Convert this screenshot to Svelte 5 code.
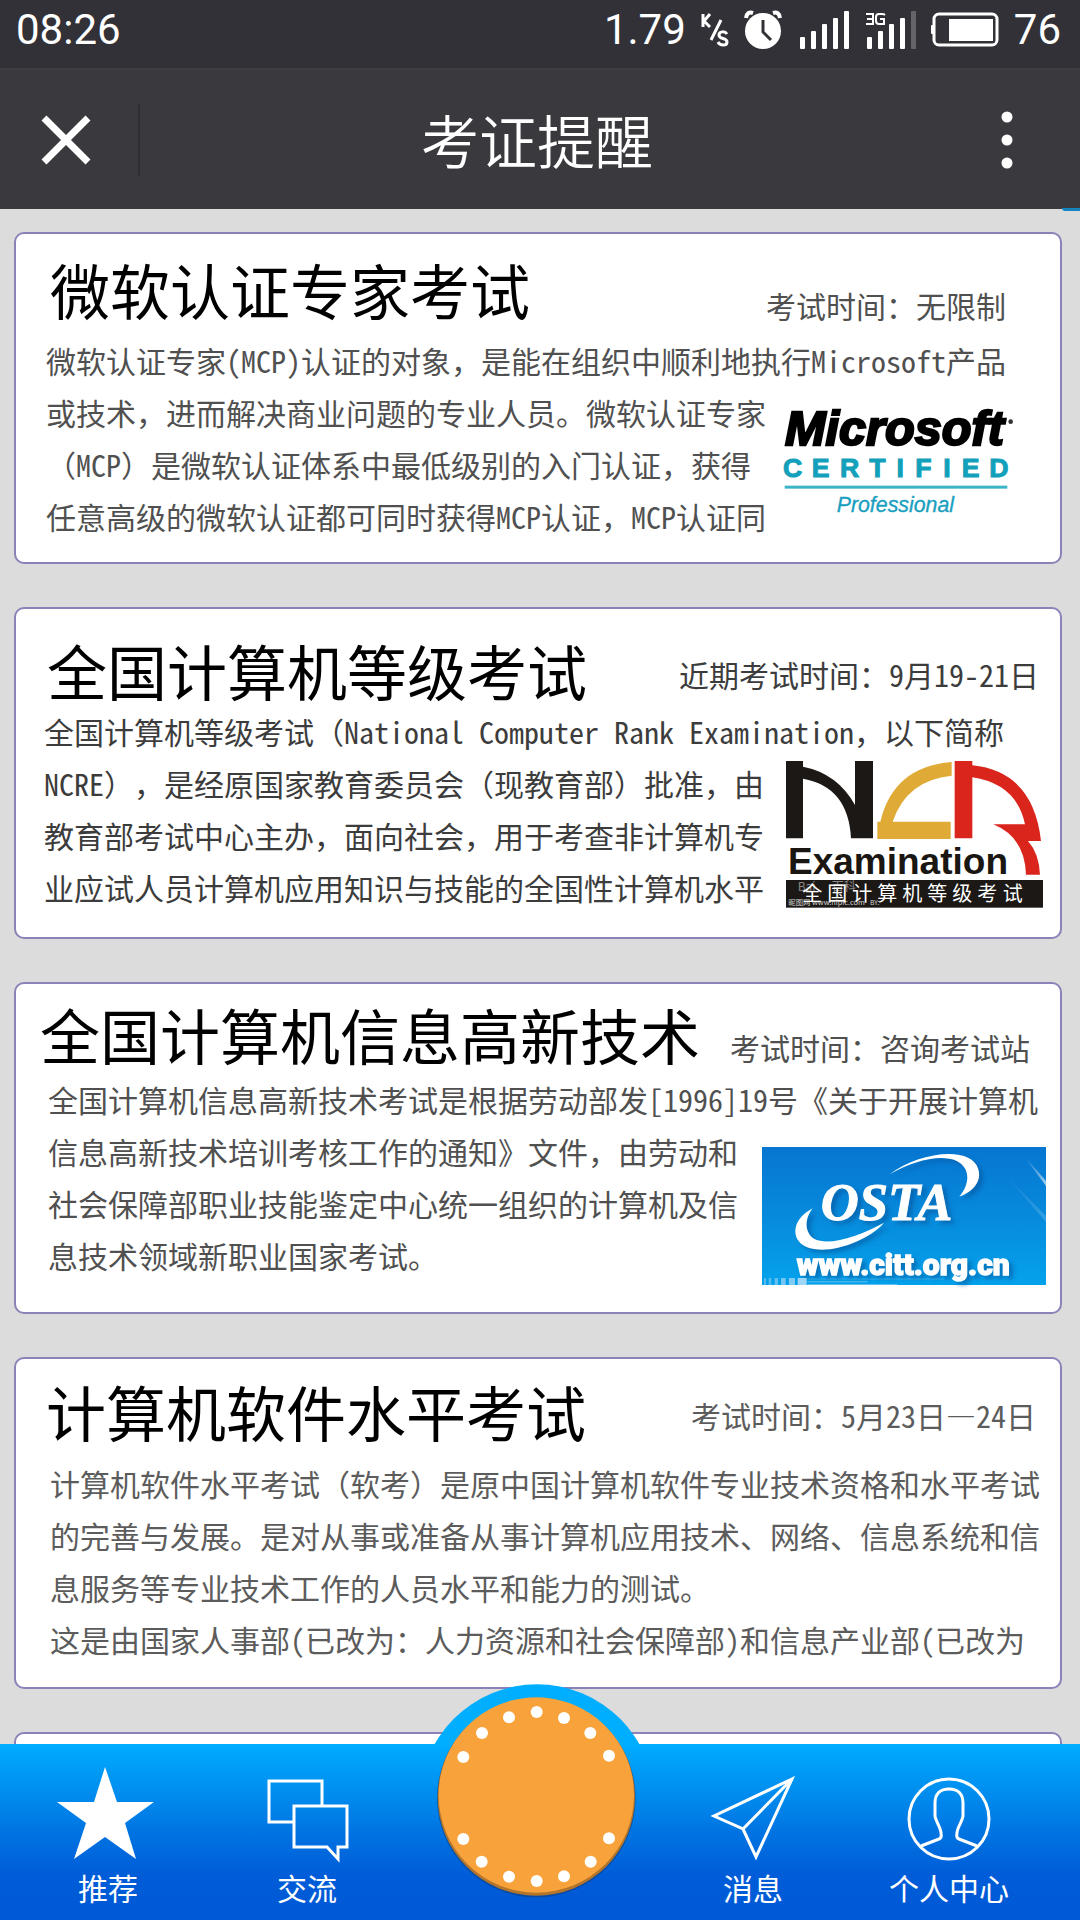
<script>
  const cards = [
    {
      kind: 'microsoft',
      title: '微软认证专家考试',
      date: '考试时间：无限制',
      lead: '微软认证专家(MCP)认证的对象，是能在组织中顺利地执行Microsoft产品',
      lines: ['或技术，进而解决商业问题的专业人员。微软认证专家', '（MCP）是微软认证体系中最低级别的入门认证，获得', '任意高级的微软认证都可同时获得MCP认证，MCP认证同']
    },
    {
      kind: 'ncre',
      title: '全国计算机等级考试',
      date: '近期考试时间：9月19-21日',
      lead: '全国计算机等级考试（National Computer Rank Examination，以下简称',
      lines: ['NCRE），是经原国家教育委员会（现教育部）批准，由', '教育部考试中心主办，面向社会，用于考查非计算机专', '业应试人员计算机应用知识与技能的全国性计算机水平']
    },
    {
      kind: 'osta',
      title: '全国计算机信息高新技术',
      date: '考试时间：咨询考试站',
      lead: '全国计算机信息高新技术考试是根据劳动部发[1996]19号《关于开展计算机',
      lines: ['信息高新技术培训考核工作的通知》文件，由劳动和', '社会保障部职业技能鉴定中心统一组织的计算机及信', '息技术领域新职业国家考试。']
    },
    {
      kind: 'software',
      title: '计算机软件水平考试',
      date: '考试时间：5月23日—24日',
      lead: '计算机软件水平考试（软考）是原中国计算机软件专业技术资格和水平考试',
      lines: ['的完善与发展。是对从事或准备从事计算机应用技术、网络、信息系统和信', '息服务等专业技术工作的人员水平和能力的测试。', '这是由国家人事部(已改为：人力资源和社会保障部)和信息产业部(已改为']
    }
  ];
  const dots = [
    [412, 156], [494, 174], [573, 219], [629, 287], [629, 535], [574, 605], [494, 649], [412, 663],
    [329, 650], [247, 605], [192, 537], [192, 291], [248, 219], [329, 172]
  ];
</script>

<div class="app" lang="zh-CN">
  <div class="status">
    <span class="clock">08:26</span>
    <span>1.79</span>
    <svg width="28" height="36" viewBox="0 0 28 36" fill="none" stroke="#fff" stroke-width="3">
      <path d="M2 2v13M9 2l-6 7 6 6M20 8 10 28" />
      <path d="M26 22c-2-3-8-3-8 1 0 5 8 2 8 7 0 4-7 4-9 0" />
    </svg>
    <svg width="41" height="40" viewBox="0 0 41 40">
      <circle cx="19" cy="21" r="18" fill="#fff" />
      <path d="M2 8Q3 1 9 3M36 8Q35 1 29 3" fill="none" stroke="#fff" stroke-width="4" />
      <path d="M19 10v12l8 8" fill="none" stroke="#323137" stroke-width="3" />
    </svg>
    <svg width="50" height="40" viewBox="0 0 50 40" fill="#fff">
      <rect x="0" y="27" width="5" height="12" rx="1" /><rect x="11" y="21" width="5" height="18" rx="1" /><rect x="22" y="14" width="5" height="25" rx="1" /><rect x="33" y="8" width="5" height="31" rx="1" /><rect x="44" y="1" width="5" height="38" rx="1" />
    </svg>
    <svg width="51" height="40" viewBox="0 0 51 40" fill="#fff">
      <path d="M1 4h7v10H1M2 9h6M20 5q-1-1-3-1h-3q-3 0-3 3v4q0 3 3 3h5V9h-4" fill="none" stroke="#fff" stroke-width="2" />
      <rect x="2" y="27" width="5" height="12" rx="1" /><rect x="13" y="21" width="5" height="18" rx="1" /><rect x="24" y="14" width="5" height="25" rx="1" /><rect x="35" y="8" width="5" height="31" rx="1" /><rect x="46" y="1" width="5" height="38" rx="1" fill="#656469" />
    </svg>
    <svg width="68" height="36" viewBox="0 0 68 36">
      <rect x="3" y="2" width="63" height="31" rx="5" fill="none" stroke="#fff" stroke-width="3" />
      <rect x="0" y="13" width="3" height="9" rx="1" fill="#fff" />
      <rect x="18" y="7" width="44" height="22" fill="#fff" />
    </svg>
    <span>76</span>
  </div>

  <header>
    <button class="close" aria-label="关闭">
      <svg width="50" height="50" viewBox="0 0 50 50"><path d="m3 3 44 44M47 3 3 47" stroke="#fff" stroke-width="7" /></svg>
    </button>
    <h1>考证提醒</h1>
    <button class="more" aria-label="更多">
      <svg width="12" height="58" viewBox="0 0 12 58" fill="#fff"><circle cx="6" cy="6" r="5.5" /><circle cx="6" cy="29" r="5.5" /><circle cx="6" cy="52" r="5.5" /></svg>
    </button>
  </header>

  <main>
    {#each cards as card}
      <article class="card {card.kind}">
        <div class="head">
          <h2>{card.title}</h2>
          <span class="date">{card.date}</span>
        </div>
        <p class="lead">{card.lead}</p>
        <div class="row">
          <p>
            {#each card.lines as line}<span class="line">{line}</span>{/each}
          </p>
          {#if card.kind === 'microsoft'}
            <svg class="logo" width="230" height="108" viewBox="130 385 690 324" role="img" aria-label="Microsoft Certified Professional">
              <text x="133" y="497" font-size="146" font-weight="700" font-style="italic" fill="#000" stroke="#000" stroke-width="7">Microsoft</text>
              <circle cx="810" cy="426" r="7" fill="#333" />
              <text x="156 240 327 410 479 548 619 690 775" y="593" font-size="80" font-weight="700" fill="#12a0bb" stroke="#12a0bb" stroke-width="3" text-anchor="middle">CERTIFIED</text>
              <rect x="132" y="618" width="668" height="9" fill="#3cb4c8" />
              <text x="288" y="698" font-size="64" font-style="italic" fill="#1b9fc0" stroke="#1b9fc0" stroke-width="1">Professional</text>
            </svg>
          {:else if card.kind === 'ncre'}
            <svg class="logo" width="257" height="147" viewBox="378 363 771 441" role="img" aria-label="NCR Examination 全国计算机等级考试">
              <path d="M378 363h51v17Q532 400 585 495V363h54v232h-66Q565 440 429 416v179h-51Z" fill="#1c1815" />
              <path d="M875 366v41Q740 420 698 545h174v52H652v-52h9Q700 380 875 366Z" fill="#e0aa36" />
              <path d="M884 363h53v13Q1120 395 1143 603h-39Q1137 640 1140 704h-42Q1095 592 1000 553h95Q1070 432 937 412v183h-53Z" fill="#da251d" />
              <text x="384" y="703" font-size="111" font-weight="700" fill="#1a1612">Examination</text>
              <rect x="378" y="720" width="771" height="83" fill="#1c1815" />
              <text class="cjk" x="413" y="752" font-size="36" fill="#8a8785">Bai<tspan x="515">百科</tspan></text>
              <text class="cjk" x="385" y="795" font-size="22" fill="#d8d6d4">昵图网 www.nipic.com</text>
              <text class="cjk" x="630" y="795" font-size="20" fill="#d8d6d4">BY:</text>
              <text class="cjk" x="457 532 607 682 757 832 907 982 1058" y="784" font-size="60" fill="#fff" text-anchor="middle">全国计算机等级考试</text>
            </svg>
          {:else if card.kind === 'osta'}
            <svg class="logo" width="284" height="138" viewBox="186 353 852 414" role="img" aria-label="OSTA www.citt.org.cn">
              <defs>
                <linearGradient id="sky" x1="0" y1="0" x2="0" y2="1"><stop offset="0" stop-color="#0676d2" /><stop offset=".5" stop-color="#078adb" /><stop offset="1" stop-color="#04a2ec" /></linearGradient>
                <linearGradient id="ray" x1="0" y1="0" x2="1" y2="1"><stop offset="0" stop-color="#fff" stop-opacity="0" /><stop offset="1" stop-color="#fff" stop-opacity=".6" /></linearGradient>
              </defs>
              <rect x="186" y="353" width="852" height="414" fill="url(#sky)" />
              <path d="m970 378 68 76v16Z" fill="url(#ray)" />
              <path d="M910 430l128 130v18Z" fill="url(#ray)" opacity=".3" />
              <g class="mark" fill="#fff">
                <path d="M569 435C650 370 815 345 835 420C848 465 805 493 778 502C812 460 810 415 770 395C720 373 640 395 569 435Z" />
                <path d="M338 537C270 572 270 640 330 657C400 675 510 630 552 580C480 620 390 650 345 630C310 610 315 565 338 537Z" />
                <text class="serif" x="362" y="572" font-size="158" font-weight="700" font-style="italic" stroke="#fff" stroke-width="3">OSTA</text>
                <text class="url" x="290" y="738" font-size="90" stroke="#fff" stroke-width="4">www.citt.org.cn</text>
              </g>
              <g fill="#9fd6f5">
                <rect x="192" y="746" width="6" height="21" opacity=".5" /><rect x="206" y="746" width="8" height="21" opacity=".5" /><rect x="224" y="746" width="10" height="21" opacity=".6" /><rect x="243" y="746" width="14" height="21" opacity=".7" /><rect x="267" y="746" width="18" height="21" opacity=".8" /><rect x="293" y="746" width="27" height="21" />
                <path d="M322 748h410v2H322ZM322 756h180v3H322ZM322 764h270v3H322Z" opacity=".6" />
              </g>
            </svg>
          {/if}
        </div>
      </article>
    {/each}
    <article class="card" aria-label="更多考试"></article>
  </main>

  <nav>
    <a href="#recommend">
      <svg width="98" height="96" viewBox="0 0 98 96"><path d="M46 2l12 35h37L66 58l11 36-31-22-31 22 12-36L-2 37h37Z" fill="#fff" /></svg>
      推荐
    </a>
    <a href="#chat">
      <svg width="84" height="96" viewBox="0 0 84 96" fill="none" stroke="#fff" stroke-width="3"><path d="M28 57H4V16h53v24M29 41h53v41h-9v12L62 82H29Z" /></svg>
      交流
    </a>
    <button class="main-action" aria-label="主菜单">
      <svg width="280" height="240" viewBox="0 0 840 720">
        <defs><clipPath id="above"><rect width="840" height="194" /></clipPath></defs>
        <circle cx="417" cy="366" r="353" fill="#00aeff" clip-path="url(#above)" />
        <g transform="translate(4 -60)">
          <circle cx="411" cy="414" r="298" fill="#073f86" opacity=".6" />
          <circle cx="411" cy="411" r="296" fill="#b3752b" />
          <circle cx="411" cy="405" r="293" fill="#f8a23b" />
          {#each dots as [x, y]}<circle cx={x} cy={y} r="18" fill="#fff" />{/each}
        </g>
      </svg>
    </button>
    <a href="#messages">
      <svg width="84" height="96" viewBox="0 0 84 96" fill="none" stroke="#fff" stroke-width="3"><path d="M81 14 3 51l29 13 13 28ZM32 64 81 14" /></svg>
      消息
    </a>
    <a href="#profile">
      <svg width="84" height="96" viewBox="0 0 84 96" fill="none" stroke="#fff" stroke-width="3"><circle cx="42" cy="54" r="40" /><path d="M14 81l18-7q3-1 2-6c0-5-5-11-6-17V38c0-9 5-14 14-14s14 5 14 14v13c-1 6-6 12-6 17q-1 5 2 6l18 7" /></svg>
      个人中心
    </a>
  </nav>
</div>

<style>
  :global(body) { margin: 0; }
  .app {
    display: flex;
    flex-direction: column;
    height: 100vh;
    overflow: hidden;
    background: #dcdcdc;
    font-family: "Noto Sans Mono CJK SC", "Noto Sans CJK SC", sans-serif;
    text-spacing-trim: space-all;
  }
  h1, h2, p { margin: 0; font-weight: 400; }
  button { border: 0; padding: 0; background: none; cursor: pointer; }
  svg { display: block; flex: none; overflow: visible; }

  .status {
    display: flex;
    align-items: center;
    gap: 15px;
    box-sizing: border-box;
    height: 68px;
    padding: 0 19px 8px 16px;
    background: #323137;
    color: #fff;
    font: 400 42px/60px Roboto, sans-serif;
  }
  .clock { margin-right: auto; }

  header {
    position: relative;
    display: grid;
    grid-template-columns: 140px 1fr 146px;
    align-items: center;
    height: 139px;
    border-top: 2px solid #3f3e43;
    background: #3a393d;
  }
  header::after {
    content: "";
    position: absolute;
    right: 0;
    bottom: -2px;
    width: 18px;
    height: 3px;
    border-bottom-left-radius: 18px;
    background: #1583bd;
  }
  .close {
    display: grid;
    place-items: center;
    height: 72px;
    padding-right: 6px;
    border-right: 2px solid #2e2d31;
  }
  .more { display: grid; place-items: center; height: 72px; }
  h1 {
    padding-bottom: 2px;
    color: #fff;
    font: 350 58px/80px "Noto Sans CJK SC", sans-serif;
    text-align: center;
  }

  main {
    display: flex;
    flex: 1;
    flex-direction: column;
    gap: 43px;
    min-height: 0;
    padding: 23px 18px 0 14px;
    overflow-y: auto;
    scrollbar-width: none;
  }
  .card {
    flex: none;
    box-sizing: border-box;
    min-height: 332px;
    border: 2px solid #8b82b8;
    border-radius: 10px;
    background: #fff;
    color: #505050;
    font-size: 30px;
    line-height: 52px;
    white-space: nowrap;
  }
  .head { display: flex; justify-content: space-between; align-items: flex-end; }
  h2 { color: #000; font: 400 60px/60px "Noto Sans CJK SC", sans-serif; }
  .row { display: flex; justify-content: space-between; align-items: flex-start; }
  .line { display: block; }

  .microsoft { padding: 25px 46px 0 30px; }
  .microsoft .head { padding: 0 8px 15px 4px; }
  .microsoft .date { line-height: 28px; }
  .microsoft .logo { margin-top: 22px; }

  .ncre { padding: 31px 17px 0 28px; color: #3c3c3c; }
  .ncre .head { padding: 0 4px 5px 3px; }
  .ncre .logo { margin-top: 4px; }

  .osta { padding: 20px 14px 0 32px; }
  .osta .head { padding: 0 16px 9px 0; }
  .osta h2 { margin-left: -8px; }
  .osta .date { line-height: 34px; }
  .osta .logo { margin-top: 22px; }

  .software { padding: 22px 8px 0 34px; color: #5c5c5c; }
  .software .head { padding: 0 16px 16px 0; }
  .software h2 { margin-left: -4px; }

  text { font-family: "Liberation Sans", sans-serif; }
  .cjk { font-family: "Noto Sans CJK SC", sans-serif; }
  .serif { font-family: "Liberation Serif", serif; }
  .url { font-family: Roboto, sans-serif; font-weight: 900; }
  .mark { filter: drop-shadow(12px 10px 6px #064f9488); }

  nav {
    position: relative;
    z-index: 1;
    display: grid;
    grid-template-columns: 216fr 182fr 280fr 150fr 242fr;
    height: 176px;
    padding-right: 10px;
    background: linear-gradient(#00adff 0, #009bf6 15%, #0074e2 50%, #005cd8 75%, #0059d6 100%);
  }
  nav a {
    display: flex;
    flex-direction: column;
    align-items: center;
    gap: 6px;
    padding-top: 21px;
    color: #fff;
    font: 400 30px/40px "Noto Sans CJK SC", sans-serif;
    text-decoration: none;
    white-space: nowrap;
  }
  .main-action { display: flex; align-items: flex-end; justify-content: center; height: 176px; }
</style>
